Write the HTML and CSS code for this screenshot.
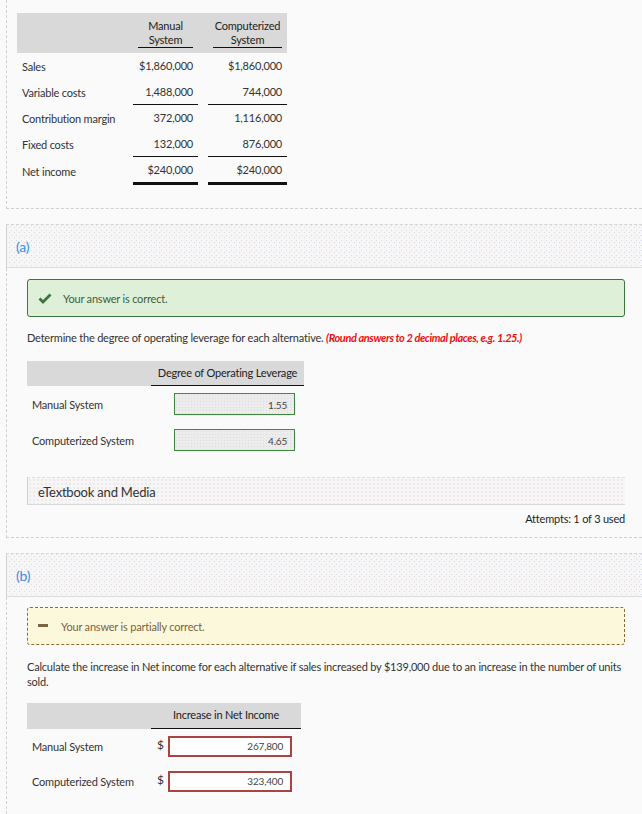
FILE: index.html
```html
<!DOCTYPE html>
<html>
<head>
<meta charset="utf-8">
<link rel="stylesheet" href="styles.css">
</head>
<body>
<div class="intro">
  <div class="fin">
    <div class="fin-row fin-head">
      <div></div>
      <div class="fh"><div class="fh-in">Manual<br>System</div></div>
      <div class="fh"><div class="fh-in">Computerized<br>System</div></div>
    </div>
    <div class="fin-row">
      <div class="lbl">Sales</div>
      <div class="val">$1,860,000</div>
      <div class="val">$1,860,000</div>
    </div>
    <div class="fin-row">
      <div class="lbl">Variable costs</div>
      <div class="val line">1,488,000</div>
      <div class="val line">744,000</div>
    </div>
    <div class="fin-row">
      <div class="lbl">Contribution margin</div>
      <div class="val">372,000</div>
      <div class="val">1,116,000</div>
    </div>
    <div class="fin-row">
      <div class="lbl">Fixed costs</div>
      <div class="val line">132,000</div>
      <div class="val line">876,000</div>
    </div>
    <div class="fin-row">
      <div class="lbl">Net income</div>
      <div class="val dbl">$240,000</div>
      <div class="val dbl">$240,000</div>
    </div>
  </div>
</div>

<div class="part">
  <div class="part-head">(a)</div>
  <div class="part-body">
    <div class="msg msg-ok">
      <svg class="ico-check" width="14" height="11" viewBox="0 0 14 11"><path d="M1.5 5.5 L5 9 L12.5 1.5" fill="none" stroke="#3c763d" stroke-width="2.8"/></svg>
      <span>Your answer is correct.</span>
    </div>
    <p class="instr">Determine the degree of operating leverage for each alternative. <em class="hint">(Round answers to 2 decimal places, e.g. 1.25.)</em></p>
    <div class="qt qt-a">
      <div class="qt-row qt-head">
        <div></div>
        <div class="qh">Degree of Operating Leverage</div>
      </div>
      <div class="qt-row">
        <div class="qlbl">Manual System</div>
        <div class="qcell"><div class="inp inp-ok">1.55</div></div>
      </div>
      <div class="qt-row">
        <div class="qlbl">Computerized System</div>
        <div class="qcell"><div class="inp inp-ok">4.65</div></div>
      </div>
    </div>
    <div class="etext">eTextbook and Media</div>
    <div class="attempts">Attempts: 1 of 3 used</div>
  </div>
</div>

<div class="part part-b">
  <div class="part-head">(b)</div>
  <div class="part-body">
    <div class="msg msg-part">
      <span class="ico-dash"></span>
      <span>Your answer is partially correct.</span>
    </div>
    <p class="instr instr-b">Calculate the increase in Net income for each alternative if sales increased by $139,000 due to an increase in the number of units sold.</p>
    <div class="qt qt-b">
      <div class="qt-row qt-head">
        <div></div>
        <div class="qh">Increase in Net Income</div>
      </div>
      <div class="qt-row">
        <div class="qlbl">Manual System</div>
        <div class="qcell qcell-b"><span class="cur">$</span><div class="inp inp-bad">267,800</div></div>
      </div>
      <div class="qt-row">
        <div class="qlbl">Computerized System</div>
        <div class="qcell qcell-b"><span class="cur">$</span><div class="inp inp-bad">323,400</div></div>
      </div>
    </div>
  </div>
</div>
</body>
</html>
```
FILE: styles.css
```css
html, body {
  margin: 0;
  padding: 0;
  background: #fafafa;
}
body {
  font-family: Lato, "Open Sans", sans-serif;
  font-size: 11px;
  color: #333;
  letter-spacing: -0.2px;
}

/* top financial table */
.intro {
  margin-left: 6px;
  border-left: 1px dashed #d0d0d0;
  border-bottom: 1px dashed #d0d0d0;
  padding: 13px 0 25px 10px;
}
.fin {
  width: 270px;
}
.fin-row {
  display: grid;
  grid-template-columns: 106px 65px 79px;
  column-gap: 10px;
  height: 26px;
  align-items: center;
}
.fin-head {
  height: auto;
  background: #d9d9d9;
  padding: 6px 0 5px;
  align-items: end;
}
.fh {
  padding: 0 5px;
}
.fh-in {
  text-align: center;
  line-height: 14px;
  border-bottom: 1px solid #111;
  color: #222;
}
.lbl {
  padding-left: 5px;
  white-space: nowrap;
}
.val {
  text-align: right;
  padding-right: 5px;
  height: 26px;
  line-height: 26px;
  box-sizing: border-box;
}
.val.line {
  border-bottom: 1px solid #111;
}
.val.dbl {
  border-bottom: 3px solid #111;
  height: 28px;
  line-height: 26px;
}

/* parts */
.part {
  margin-top: 15px;
  margin-left: 6px;
}
.part-b {
  margin-top: 15px;
}
.part-head {
  height: 42px;
  line-height: 44px;
  padding-left: 9px;
  font-size: 14px;
  color: #3a8ee0;
  border-top: 1px dashed #d6d6d6;
  border-left: 1px solid #d0d0d0;
  border-bottom: 1px solid #dcdcdc;
  background-color: #f6f6f6;
  background-image: radial-gradient(circle, #e9d3df 0.7px, transparent 0.9px),
                    radial-gradient(circle, #d6dcec 0.7px, transparent 0.9px);
  background-size: 5px 5px, 5px 5px;
  background-position: 0 0, 2px 3px;
}
.part-body {
  border-left: 1px dashed #d0d0d0;
  border-bottom: 1px dashed #d0d0d0;
  padding: 11px 17px 11px 20px;
}
.part-b .part-body {
  border-bottom: none;
  padding-top: 10px;
  padding-bottom: 20px;
}

.msg {
  display: flex;
  align-items: center;
  height: 36px;
  border-radius: 3px;
  padding-left: 10px;
  font-size: 11px;
}
.msg-ok {
  background: #dff0d8;
  border: 1px solid #3c763d;
  color: #3c5e3c;
}
.ico-check {
  margin-right: 11px;
}
.msg-part {
  background: #fcf8dc;
  border: 1px dashed #8a6d3b;
  color: #7a6340;
  height: 36px;
}
.ico-dash {
  display: inline-block;
  width: 10px;
  height: 3px;
  background: #7d6444;
  margin-right: 13px;
  margin-top: -2px;
}

.instr {
  margin: 13px 0 0;
  line-height: 15px;
  color: #333;
}
.hint {
  color: #ee1111;
  font-weight: bold;
  font-style: italic;
  letter-spacing: -0.4px;
}
.instr-b {
  margin-top: 14px;
}

/* question tables */
.qt {
  margin-top: 16px;
}
.qt-a { width: 277px; }
.qt-b { width: 274px; margin-top: 14px; }
.qt-row {
  display: grid;
  grid-template-columns: 124px 1fr;
  height: 36px;
  align-items: center;
}
.qt-b .qt-row { height: 35px; }
.qt-row.qt-head {
  height: 25px;
  background: #d9d9d9;
  align-items: stretch;
}
.qt-b .qt-row.qt-head { height: 26px; }
.qh {
  border-bottom: 1px solid #111;
  text-align: center;
  line-height: 24px;
  color: #222;
}
.qlbl {
  padding-left: 5px;
}
.qcell {
  padding-left: 23px;
  padding-right: 9px;
}
.inp {
  height: 22px;
  line-height: 22px;
  box-sizing: border-box;
  text-align: right;
  padding-right: 7px;
  font-size: 10px;
  color: #444;
}
.inp-ok {
  border: 1px solid #3c8a3c;
  background-color: #ececec;
  background-image: radial-gradient(circle, #dcdcdc 0.6px, transparent 0.8px);
  background-size: 3px 3px;
}
.qcell-b {
  display: flex;
  align-items: center;
  padding-left: 6px;
  padding-right: 9px;
}
.cur {
  width: 11px;
  margin-top: -4px;
  font-size: 12px;
  color: #333;
}
.inp-bad {
  flex: 1;
  height: 21px;
  line-height: 17px;
  border: 2px solid #a94442;
  background: #fff;
  padding-right: 7px;
}

.etext {
  margin-top: 19px;
  height: 28px;
  line-height: 28px;
  box-sizing: border-box;
  padding-left: 10px;
  font-size: 13px;
  color: #333;
  border-left: 1px solid #cfcfcf;
  border-top: 1px dashed #dedede;
  border-bottom: 1px solid #d8d8d8;
  background-color: #f6f6f6;
  background-image: radial-gradient(circle, #ead6e2 0.6px, transparent 0.8px);
  background-size: 4px 4px;
}
.attempts {
  margin-top: 7px;
  text-align: right;
  line-height: 14px;
  font-size: 11px;
  color: #1e1e1e;
}
```
